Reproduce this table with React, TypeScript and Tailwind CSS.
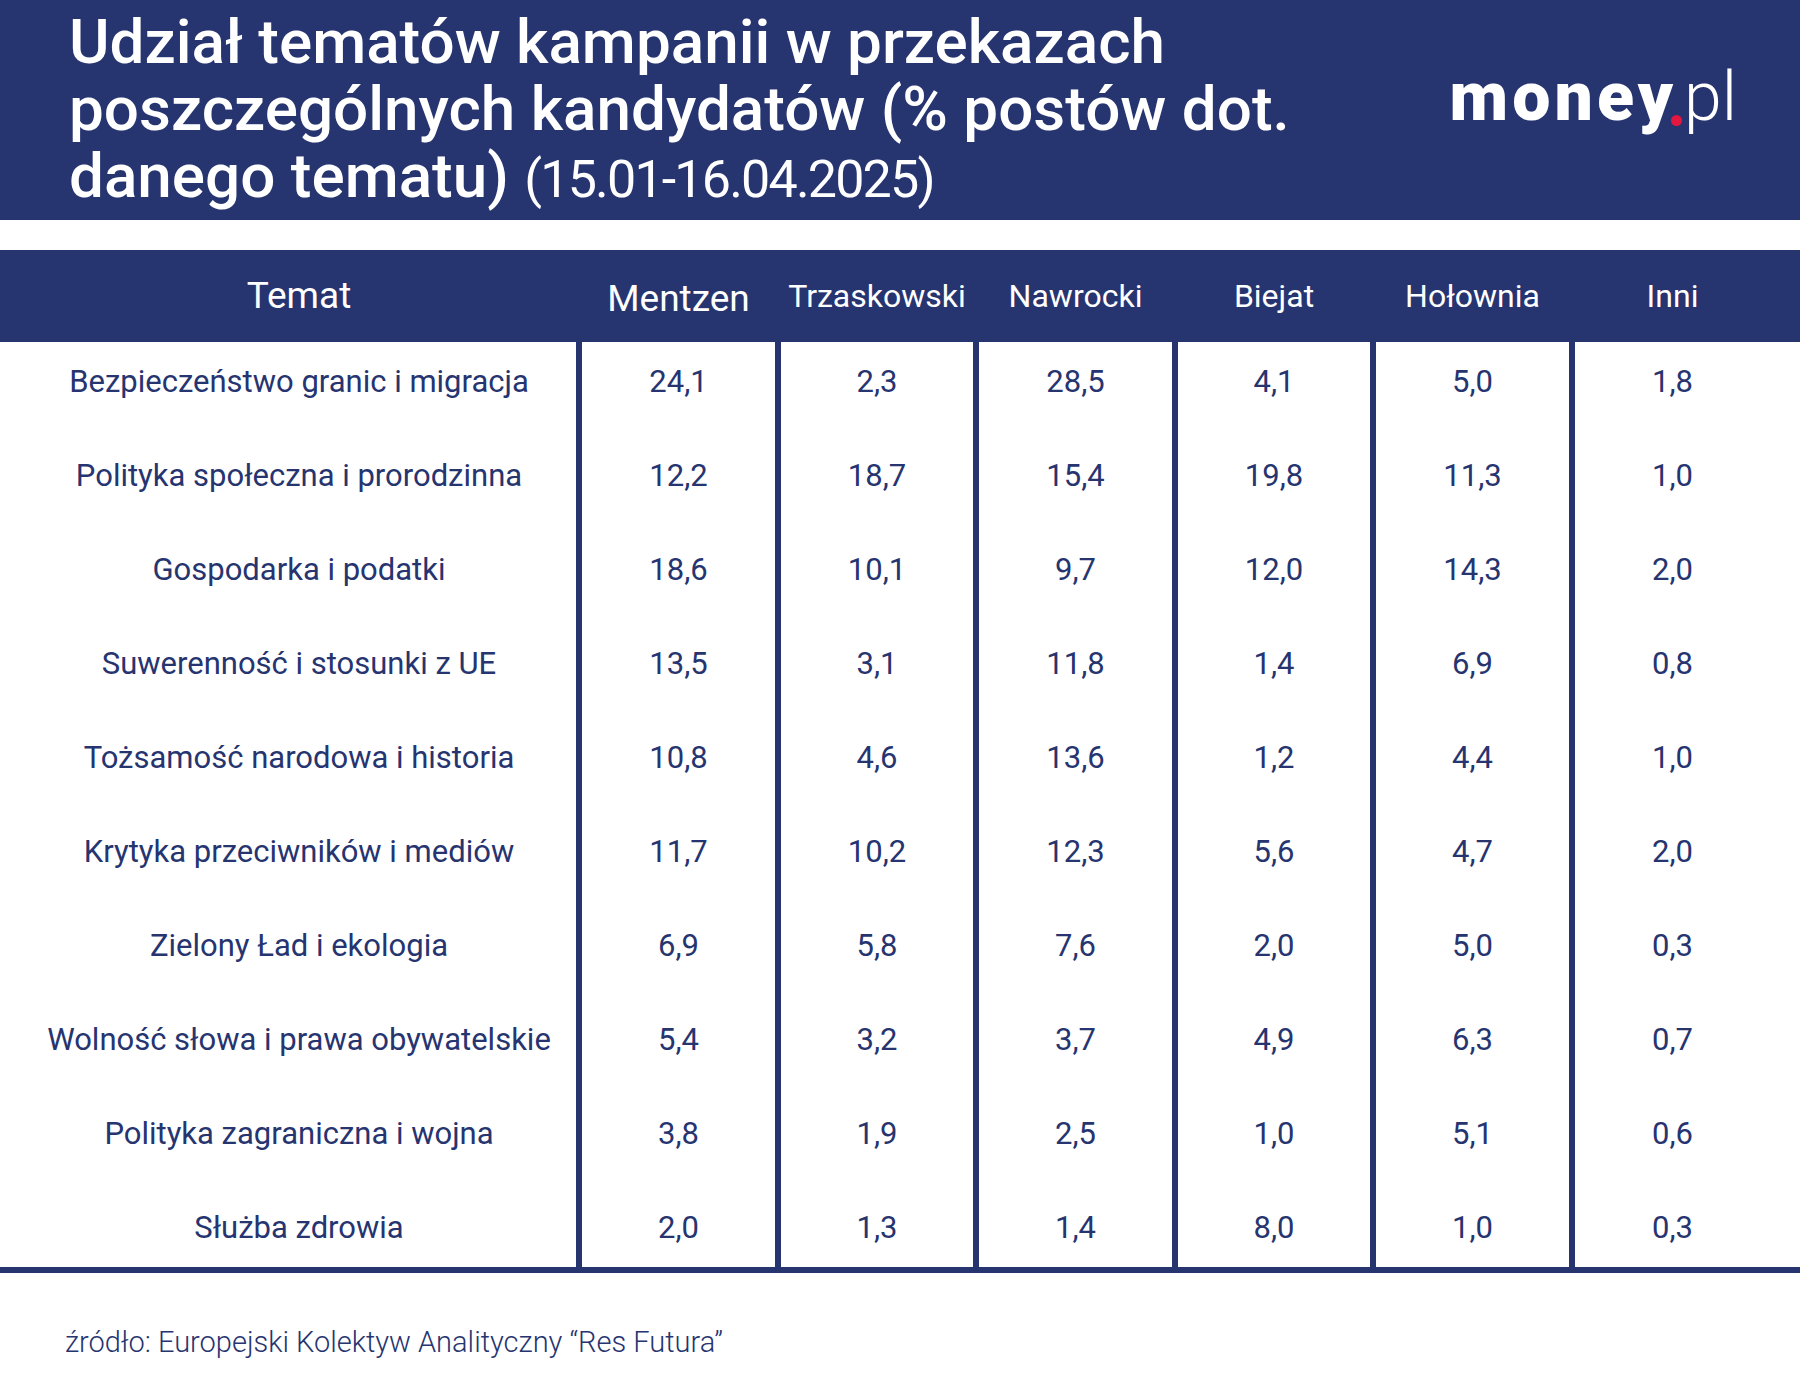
import React from 'react';

type Row = {
  topic: string;
  values: string[];
};

const candidates = ['Mentzen', 'Trzaskowski', 'Nawrocki', 'Biejat', 'Hołownia', 'Inni'];

const rows: Row[] = [
  { topic: 'Bezpieczeństwo granic i migracja', values: ['24,1', '2,3', '28,5', '4,1', '5,0', '1,8'] },
  { topic: 'Polityka społeczna i prorodzinna', values: ['12,2', '18,7', '15,4', '19,8', '11,3', '1,0'] },
  { topic: 'Gospodarka i podatki', values: ['18,6', '10,1', '9,7', '12,0', '14,3', '2,0'] },
  { topic: 'Suwerenność i stosunki z UE', values: ['13,5', '3,1', '11,8', '1,4', '6,9', '0,8'] },
  { topic: 'Tożsamość narodowa i historia', values: ['10,8', '4,6', '13,6', '1,2', '4,4', '1,0'] },
  { topic: 'Krytyka przeciwników i mediów', values: ['11,7', '10,2', '12,3', '5,6', '4,7', '2,0'] },
  { topic: 'Zielony Ład i ekologia', values: ['6,9', '5,8', '7,6', '2,0', '5,0', '0,3'] },
  { topic: 'Wolność słowa i prawa obywatelskie', values: ['5,4', '3,2', '3,7', '4,9', '6,3', '0,7'] },
  { topic: 'Polityka zagraniczna i wojna', values: ['3,8', '1,9', '2,5', '1,0', '5,1', '0,6'] },
  { topic: 'Służba zdrowia', values: ['2,0', '1,3', '1,4', '8,0', '1,0', '0,3'] },
];

const cols = 'grid grid-cols-[576px_199px_198px_199px_198px_199px_1fr]';

function Logo() {
  return (
    <div className="flex items-baseline text-white leading-none mt-[55px]">
      <span className="text-[68px] font-black tracking-[0.06em]">money</span>
      <span className="inline-block w-[11px] h-[11px] rounded-full bg-[#e3173f] translate-y-[6px] -ml-[6px]" />
      <span className="text-[68px] font-light ml-[2px]">pl</span>
    </div>
  );
}

export default function App() {
  return (
    <div className="w-[1800px] h-[1400px] bg-white font-['Roboto',sans-serif] text-[#263470]">
      <header className="h-[220px] bg-[#263470] flex justify-between pl-[69px] pr-[63px] pt-[8px]">
        <h1 className="text-white text-[62px] font-medium leading-[67px]">
          <span className="block">Udział tematów kampanii w przekazach</span>
          <span className="block">poszczególnych kandydatów (% postów dot.</span>
          <span className="block">
            danego tematu){' '}
            <span className="font-normal text-[52px] tracking-[-0.035em]">(15.01-16.04.2025)</span>
          </span>
        </h1>
        <Logo />
      </header>

      <div className="mt-[30px]">
        <div className={`${cols} h-[92px] bg-[#263470] text-white items-center`}>
          <div className="pl-[22px] text-center text-[37px]">Temat</div>
          {candidates.map((name, i) => (
            <div
              key={name}
              className={
                i === 0
                  ? 'pl-[6px] text-center text-[37px] mt-[6px]'
                  : i === 5
                    ? 'pl-[6px] pr-[30px] text-center text-[32px]'
                    : 'pl-[6px] text-center text-[32px]'
              }
            >
              {name}
            </div>
          ))}
        </div>

        <div className="h-[925px] overflow-hidden">
          <div className="-mt-[7px]">
            {rows.map((row) => (
              <div key={row.topic} className={`${cols} h-[94px] text-[31px]`}>
                <div className="pl-[22px] flex items-center justify-center">{row.topic}</div>
                {row.values.map((v, i) => (
                  <div
                    key={i}
                    className={`border-l-[6px] border-[#263470] flex items-center justify-center ${
                      i === 5 ? 'pr-[30px]' : ''
                    }`}
                  >
                    {v}
                  </div>
                ))}
              </div>
            ))}
          </div>
        </div>
        <div className="h-[6px] bg-[#263470]" />
      </div>

      <p className="pl-[65px] mt-[48px] text-[29px] font-light">
        źródło: Europejski Kolektyw Analityczny “Res Futura”
      </p>
    </div>
  );
}
